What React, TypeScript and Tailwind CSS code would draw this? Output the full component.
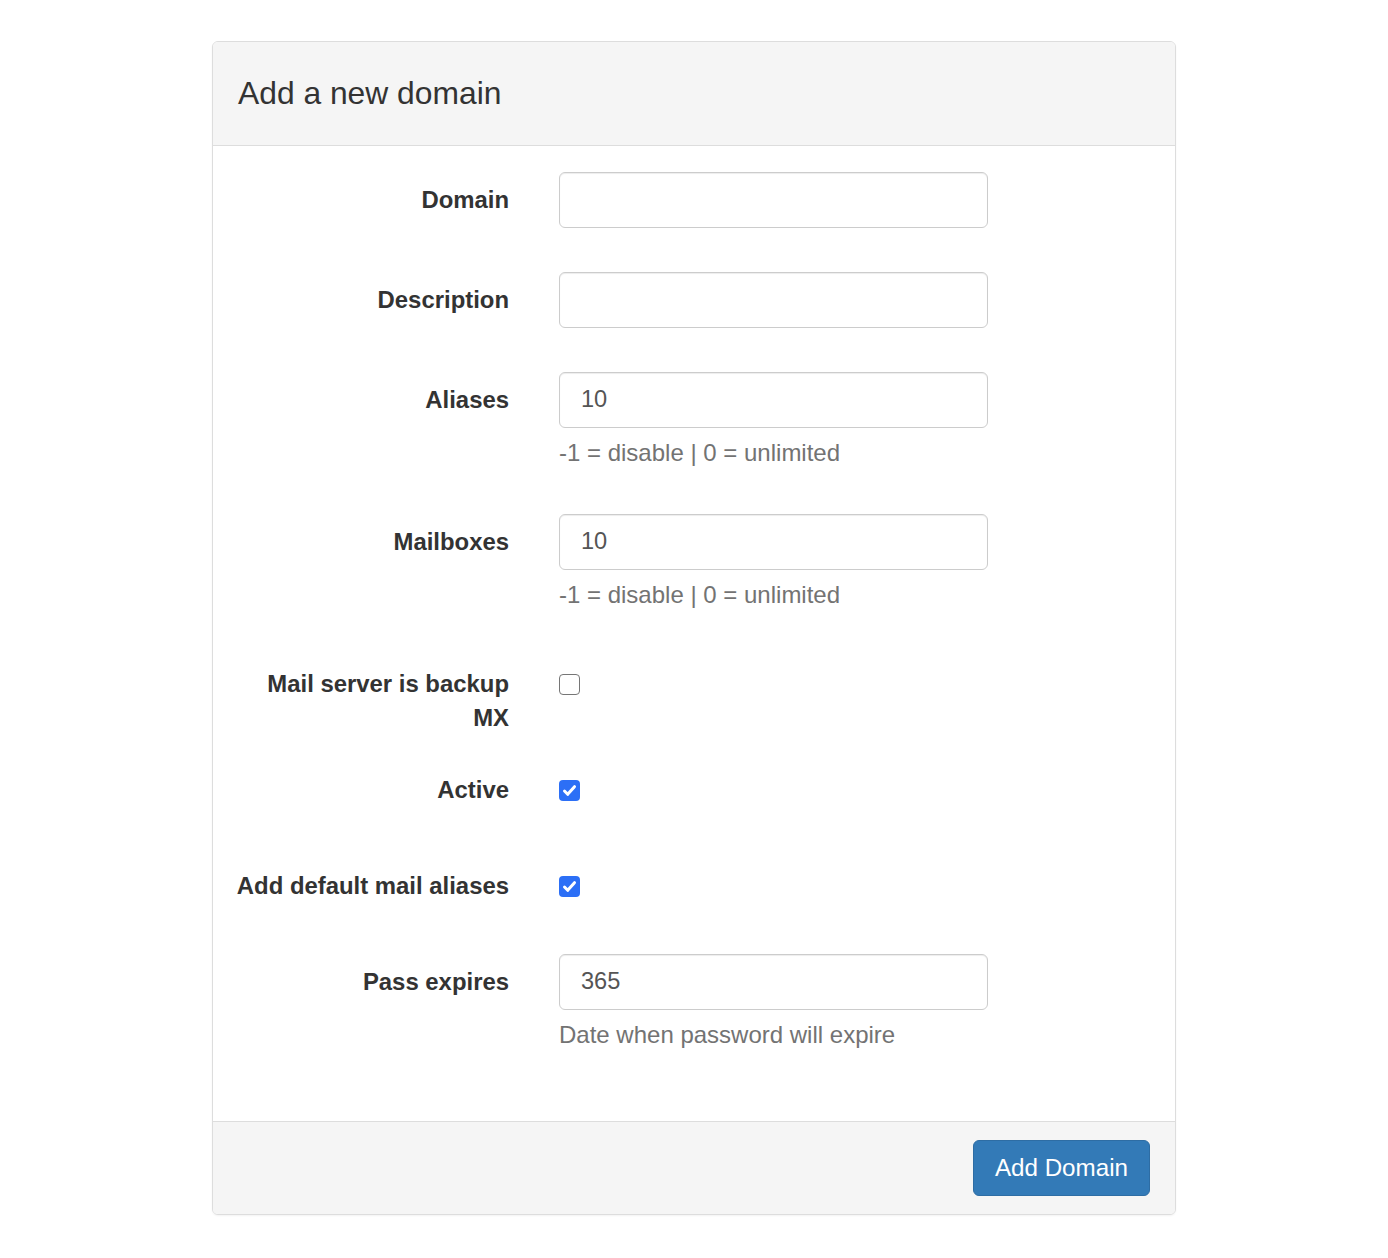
const font = { fontFamily: '"Liberation Sans", Arial, Helvetica, sans-serif' }

function Label({ children }: { children: React.ReactNode }) {
  return (
    <label className="w-[296px] shrink-0 pt-[11px] text-right text-[23.9px] font-bold leading-[34px] text-[#333]">
      {children}
    </label>
  )
}

function TextField({ value, help }: { value?: string; help?: string }) {
  return (
    <div className="w-[429px]">
      <div className="flex h-[56px] items-center rounded-[6px] border border-[#ccc] bg-white px-[21px] text-[23.6px] text-[#555] shadow-[inset_0_1px_1px_rgba(0,0,0,0.075)]">
        {value}
      </div>
      {help && <p className="mt-[8px] text-[24px] leading-[34px] text-[#737373]">{help}</p>}
    </div>
  )
}

function Checkbox({ checked }: { checked?: boolean }) {
  if (!checked) {
    return <span className="mt-[18px] block h-[21px] w-[21px] rounded-[4px] border-[1.5px] border-[#767676] bg-white" />
  }
  return (
    <span className="mt-[18px] flex h-[21px] w-[21px] items-center justify-center rounded-[4px] bg-[#2c6ff6]">
      <svg viewBox="0 0 16 16" className="h-[17px] w-[17px]" fill="none">
        <path d="M3.3 8.5l3 3.1 6.4-7.2" stroke="white" strokeWidth="2.8" strokeLinecap="round" strokeLinejoin="round" />
      </svg>
    </span>
  )
}

export default function App() {
  return (
    <div className="min-h-screen bg-white pt-[41px]" style={font}>
      <div className="mx-auto w-[964px] overflow-hidden rounded-[6px] border border-[#ddd] bg-white shadow-[0_1px_2px_rgba(0,0,0,0.05)]">
        <div className="flex h-[104px] items-center border-b border-[#ddd] bg-[#f5f5f5] px-[25px]">
          <h3 className="text-[31.8px] leading-none text-[#333]">Add a new domain</h3>
        </div>

        <div className="flex flex-col gap-[44px] pb-[69px] pt-[26px]">
          <div className="flex gap-[50px]">
            <Label>Domain</Label>
            <TextField />
          </div>
          <div className="flex gap-[50px]">
            <Label>Description</Label>
            <TextField />
          </div>
          <div className="flex gap-[50px]">
            <Label>Aliases</Label>
            <TextField value="10" help="-1 = disable | 0 = unlimited" />
          </div>
          <div className="flex gap-[50px]">
            <Label>Mailboxes</Label>
            <TextField value="10" help="-1 = disable | 0 = unlimited" />
          </div>
          <div className="flex h-[62px] gap-[50px]">
            <Label>
              Mail server is backup
              <br />
              MX
            </Label>
            <Checkbox />
          </div>
          <div className="flex h-[52px] gap-[50px]">
            <Label>Active</Label>
            <Checkbox checked />
          </div>
          <div className="flex h-[52px] gap-[50px]">
            <Label>Add default mail aliases</Label>
            <Checkbox checked />
          </div>
          <div className="flex gap-[50px]">
            <Label>Pass expires</Label>
            <TextField value="365" help="Date when password will expire" />
          </div>
        </div>

        <div className="flex justify-end border-t border-[#ddd] bg-[#f5f5f5] px-[25px] py-[18px]">
          <button className="h-[56px] rounded-[6px] border border-[#2e6da4] bg-[#337ab7] px-[21px] text-[24.2px] text-white">
            Add Domain
          </button>
        </div>
      </div>
    </div>
  )
}
